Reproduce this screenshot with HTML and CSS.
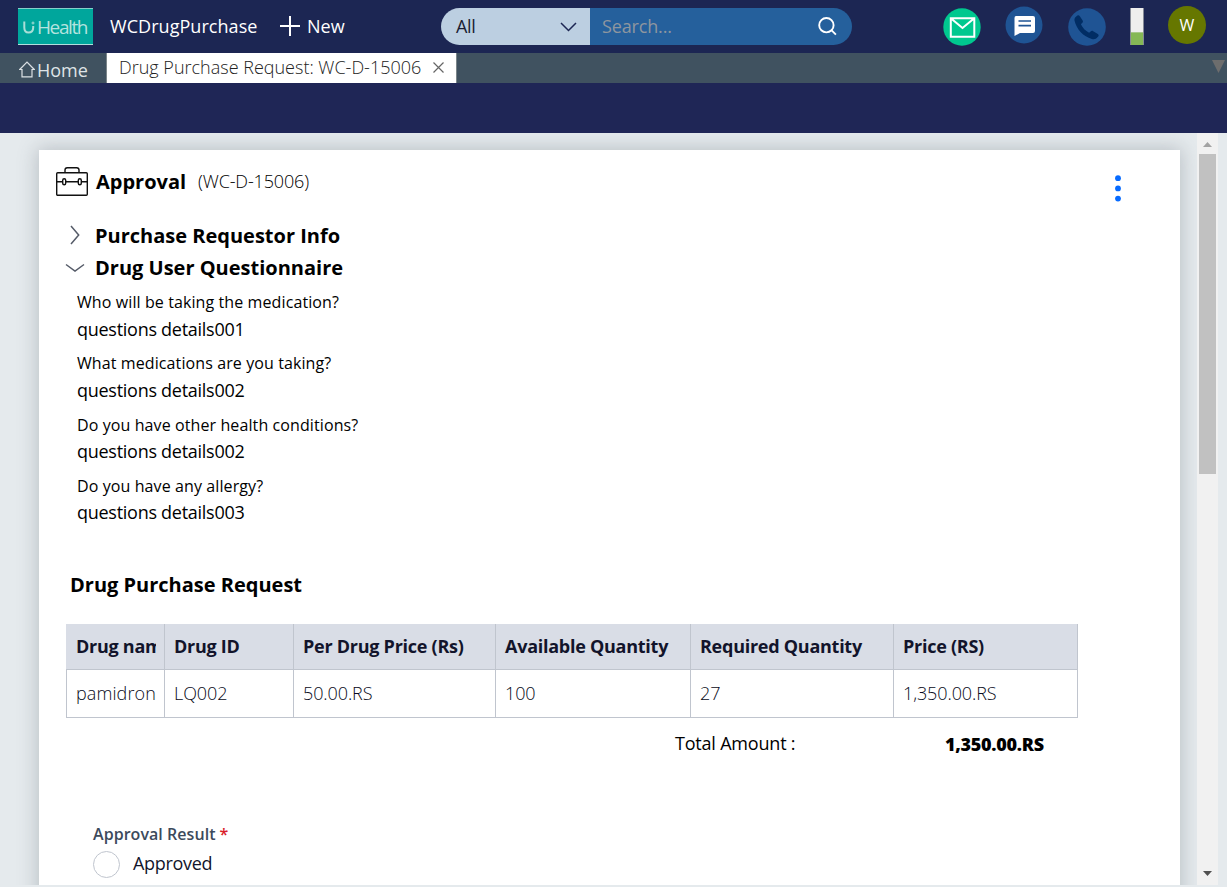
FILE: index.html
```html
<!DOCTYPE html>
<html lang="en">
<head>
<meta charset="utf-8">
<title>Drug Purchase Request</title>
<link rel="stylesheet" href="styles.css">
</head>
<body>
<header class="topbar">
  <div class="logo"><svg width="12" height="16" viewBox="0 0 12 16" fill="none" stroke="#a9ded7"><path d="M1.300 2.500v6c0 3.500 1.800 5 4.200 5s4.700-1.500 4.700-5V7" stroke-width="2"/><path d="M8.500 4h3M10 2.500v3" stroke-width="1"/></svg><span class="logo-text">Health</span></div>
  <span class="app-name">WCDrugPurchase</span>
  <svg class="plus" width="20" height="20" viewBox="0 0 20 20" stroke="#fff" stroke-width="2"><path d="M10 0v20M0 10h20"/></svg>
  <span class="new-label">New</span>
  <div class="search">
    <div class="scope"><span>All</span><svg width="17" height="10" viewBox="0 0 17 10" fill="none" stroke="#1d2653" stroke-width="1.500"><path d="M1 1l7.500 7.500L16 1"/></svg></div>
    <div class="query"><span class="placeholder">Search...</span><svg width="19" height="19" viewBox="0 0 19 19" fill="none" stroke="#fff" stroke-width="1.900"><circle cx="8.400" cy="8.200" r="7.200"/><path d="M13.400 13.200l4.500 4.500"/></svg></div>
  </div>
  <svg class="mail" width="38" height="38" viewBox="0 0 38 38"><circle cx="19" cy="19" r="18.700" fill="#00c88f"/><path d="M7.800 10.300h23.500v18.500H7.800zM7.800 10.300L19.500 20l11.800-9.700" fill="none" stroke="#fff" stroke-width="2"/></svg>
  <svg class="chat" width="38" height="38" viewBox="0 0 38 38"><circle cx="19" cy="19" r="18.500" fill="#1f5494"/><path d="M11 10h17q2 0 2 2v13q0 2-2 2H15L9.500 30V12q0-2 1.500-2z" fill="#fff"/><path d="M13.500 15H26M13.500 19.700H26" stroke="#1f5494" stroke-width="1.700"/></svg>
  <svg class="phone" width="38" height="38" viewBox="0 0 38 38"><circle cx="19" cy="19" r="18.800" fill="#1f5494"/><path d="M6.500 12.500c-.3-2 .4-2.900 1.700-4.100 1.700-1.500 2.700-1.500 3.800.1l2.500 3.700c.8 1.300.5 2-.4 2.900l-1.200 1.200c1.700 3.700 4.500 6.600 8.200 8.400l1.500-1.300c.9-.7 1.600-.8 2.600-.2l4.200 2.500c1.600 1 1.700 1.900.3 3.400-1.700 1.900-3.300 2.700-5.900 1.900C15.500 28.500 8.500 21.500 6.500 12.500z" fill="#012d64"/></svg>
  <div class="meter"><div class="meter-fill"></div></div>
  <div class="avatar">W</div>
</header>
<nav class="tabs">
  <div class="home"><svg width="16" height="17" viewBox="0 0 16 17" fill="none" stroke="#dce2e5" stroke-width="1.200"><path d="M.7 8.500L8 1l7.300 7.500H13v7.300H3V8.500z"/></svg><span>Home</span></div>
  <div class="tab"><span>Drug Purchase Request: WC-D-15006</span><svg width="11" height="11" viewBox="0 0 11 11" stroke="#666" stroke-width="1.200"><path d="M.5.500l10 10M10.500.500l-10 10"/></svg></div>
  <svg class="tabs-more" width="13" height="13" viewBox="0 0 13 13"><path d="M0 0h13L6.500 13z" fill="#6d6d6d"/></svg>
</nav>
<div class="subbar"></div>
<div class="workspace">
  <main class="card">
    <div class="title-row">
      <svg class="briefcase" width="32" height="29" viewBox="0 0 32 29" fill="none" stroke="#111" stroke-width="1.400"><rect x=".7" y="5.700" width="30.600" height="22.600" rx="1"/><path d="M9 5.500V3q0-2.300 2.300-2.300h9.400Q23 .7 23 3v2.500M1 14.700h5.500M10 14.700h12M25.500 14.700H31"/><rect x="6.700" y="11.700" width="3" height="6" rx="1.500"/><rect x="22.300" y="11.700" width="3" height="6" rx="1.500"/></svg>
      <h1 class="title">Approval</h1>
      <span class="case-id">(WC-D-15006)</span>
      <svg class="kebab" width="6" height="27" viewBox="0 0 6 27" fill="#076bff"><circle cx="3" cy="3.200" r="2.900"/><circle cx="3" cy="13.400" r="2.900"/><circle cx="3" cy="23.600" r="2.900"/></svg>
    </div>
    <div class="section first"><span class="chevron"><svg width="10" height="20" viewBox="0 0 10 20" fill="none" stroke="#555b68" stroke-width="1.500"><path d="M1 1l7.700 9L1 19"/></svg></span><h2>Purchase Requestor Info</h2></div>
    <div class="section second"><span class="chevron"><svg width="20" height="10" viewBox="0 0 20 10" fill="none" stroke="#555b68" stroke-width="1.500"><path d="M1 1.500l9 6.500 9-6.500"/></svg></span><h2>Drug User Questionnaire</h2></div>
    <dl class="questions">
      <dt class="q1">Who will be taking the medication?</dt><dd>questions details001</dd>
      <dt class="q2">What medications are you taking?</dt><dd>questions details002</dd>
      <dt class="q3">Do you have other health conditions?</dt><dd>questions details002</dd>
      <dt class="q4">Do you have any allergy?</dt><dd>questions details003</dd>
    </dl>
    <h2 class="request-title">Drug Purchase Request</h2>
    <table class="drugs">
      <colgroup><col class="c1"><col class="c2"><col class="c3"><col class="c4"><col class="c5"><col class="c6"></colgroup>
      <thead><tr><th><div class="clip">Drug nam</div></th><th>Drug ID</th><th>Per Drug Price (Rs)</th><th>Available Quantity</th><th>Required Quantity</th><th>Price (RS)</th></tr></thead>
      <tbody><tr><td><div class="clip drug">pamidron</div></td><td>LQ002</td><td>50.00.RS</td><td>100</td><td>27</td><td>1,350.00.RS</td></tr></tbody>
    </table>
    <div class="total"><span class="total-label">Total Amount :</span><span class="total-value">1,350.00.RS</span></div>
    <div class="result-label"><span>Approval Result</span><span class="required">*</span></div>
    <div class="option"><span class="radio"></span><span class="option-text">Approved</span></div>
  </main>
  <div class="scrollbar">
    <svg width="9" height="5" viewBox="0 0 9 5"><path d="M0 5L4.500 0 9 5z" fill="#a3a3a3"/></svg>
    <div class="thumb"></div>
    <svg class="down" width="9" height="5" viewBox="0 0 9 5"><path d="M0 0L4.500 5 9 0z" fill="#505050"/></svg>
  </div>
</div>
</body>
</html>
```
FILE: styles.css
```css
* { box-sizing: border-box; }
body { margin: 0; width: 1227px; height: 887px; overflow: hidden; background: #e5eaed; font-family: "Open Sans", sans-serif; font-size: 18px; color: #000; white-space: nowrap; }
svg { display: block; flex: none; }
h1, h2, dl, dd { margin: 0; }
.topbar { height: 53px; background: #1c2653; color: #fff; display: flex; align-items: center; padding-left: 18px; }
.logo { width: 75px; height: 37px; background: #00a69c; border-top: 1px solid #85d0ca; border-bottom: 1px solid #b0dfdc; display: flex; align-items: center; padding-left: 5px; gap: 2px; flex: none; }
.logo-text { font: 500 19px/24px "Open Sans", sans-serif; color: #b4e3df; letter-spacing: -1.4px; }
.app-name { width: 170px; margin-left: 17px; padding-bottom: 1px; flex: none; letter-spacing: 0.05px; }
.plus { margin: -1px 7px 0 0; }
.new-label { width: 134px; padding-bottom: 1px; flex: none; }
.search { width: 411px; height: 37px; border-radius: 18.500px; overflow: hidden; display: flex; flex: none; }
.scope { width: 149px; background: #bccfe1; color: #1a1d33; display: flex; align-items: center; justify-content: space-between; padding: 0 13px 0 15px; }
.scope span { padding-bottom: 1px; letter-spacing: -0.4px; }
.query { flex: 1; background: #25609c; display: flex; align-items: center; justify-content: space-between; padding: 0 15px 1px 12px; }
.placeholder { color: #8e969f; letter-spacing: -0.15px; }
.mail { margin-left: 91px; }
.chat { margin: -3px 0 0 24px; }
.phone { margin-left: 25px; }
.meter { width: 14px; height: 37px; margin-left: 24px; background: #eee; display: flex; align-items: flex-end; flex: none; border: solid #858a97; border-width: 0 1px; }
.meter-fill { width: 12px; height: 13px; background: #85b856; border-top: 1px solid #a7c88a; }
.avatar { width: 38px; height: 38px; border-radius: 50%; margin: -3px 0 0 24px; background: #667700; font-size: 16px; line-height: 38px; text-align: center; flex: none; }
.tabs { height: 30px; background: #405260; display: flex; align-items: center; padding-right: 2px; }
.home { width: 106px; height: 30px; padding: 3px 0 0 19px; display: flex; align-items: center; gap: 2px; color: #dfe4e7; font-size: 18px; }
.tab { width: 351px; height: 30px; background: #fff; border: solid #7b8589; border-width: 0 1px; color: #222; display: flex; align-items: center; gap: 12px; padding: 0 0 1px 12px; }
.tab span { font-weight: 300; padding-bottom: 2px; }
.tabs-more { margin-left: auto; margin-top: -3px; }
.subbar { height: 50px; background: #1f2656; }
.workspace { height: 752px; overflow: hidden; display: flex; }
.card { width: 1141px; height: 780px; margin: 17px 17px 0 39px; background: #fff; box-shadow: 0 0 18px 2px rgba(80,90,100,.28); flex: none; }
.title-row { height: 64px; display: flex; align-items: center; padding: 0 59px 2px 17px; }
.briefcase { margin-right: 8px; }
.title { font-size: 20px; font-weight: 700; width: 102px; }
.case-id { font-weight: 300; letter-spacing: -0.15px; }
.kebab { margin-left: auto; margin-top: 15px; }
.section { height: 32px; line-height: 32px; display: flex; align-items: center; padding-left: 26px; }
.section h2 { font-size: 20px; font-weight: 700; }
.first { margin-top: 6px; }
.chevron { width: 30px; display: flex; padding-bottom: 1px; }
.first .chevron { padding-left: 5px; padding-bottom: 2px; }
.questions { padding: 3px 0 0 38px; }
.questions dt { font-size: 16px; line-height: 30px; height: 30px; letter-spacing: 0.1px; }
.questions dd { line-height: 25px; height: 25px; letter-spacing: -0.27px; }
.q2 { margin-top: 6px; }
.q3, .q4 { margin-top: 7px; }
.q3 + dd, .q4 + dd { margin-top: -1px; }
.request-title { font-size: 20px; line-height: 28px; font-weight: 700; padding-left: 31px; margin-top: 46px; }
.drugs { margin: 25px 0 0 27px; width: 1012px; table-layout: fixed; border-collapse: collapse; color: #12142b; }
.c1 { width: 98px; } .c2 { width: 129px; } .c3 { width: 202px; } .c4 { width: 195px; } .c5 { width: 203px; } .c6 { width: 184px; }
.drugs th, .drugs td { border: 1px solid #c0c5ce; padding: 0 9px; text-align: left; }
.drugs th { height: 45px; padding-bottom: 2px; background: #d9dde6; font-weight: 700; letter-spacing: -0.26px; border-top-color: #d9dde6; }
.drugs th:first-child { border-left-color: #d9dde6; }
.drugs td { height: 48px; padding-bottom: 2px; font-weight: 300; letter-spacing: -0.1px; color: #080a20; }
.clip { overflow: hidden; width: 80px; }
.drugs .drug { letter-spacing: 0.1px; }
.total { display: flex; padding-left: 636px; margin-top: 12px; line-height: 26px; }
.total-label { width: 270px; letter-spacing: -0.2px; }
.total-value { font-weight: 800; padding-top: 1px; letter-spacing: -0.28px; }
.result-label { margin: 64px 0 0 54px; font-size: 16px; line-height: 26px; font-weight: 600; color: #3c4a5c; display: flex; gap: 4px; letter-spacing: 0.05px; }
.required { color: #d91c29; }
.option { display: flex; align-items: center; gap: 13px; margin: 4px 0 0 54px; height: 27px; line-height: 24px; color: #12142b; }
.option-text { padding-bottom: 3px; letter-spacing: -0.3px; }
.radio { width: 27px; height: 27px; border: 1px solid #c0c5ce; border-radius: 50%; }
.scrollbar { width: 21px; height: 752px; background: #f1f1f1; display: flex; flex-direction: column; align-items: center; padding: 9px 0 9px; }
.thumb { width: 17px; height: 320px; background: #c1c1c1; margin-top: 7px; }
.down { margin-top: auto; }
```
